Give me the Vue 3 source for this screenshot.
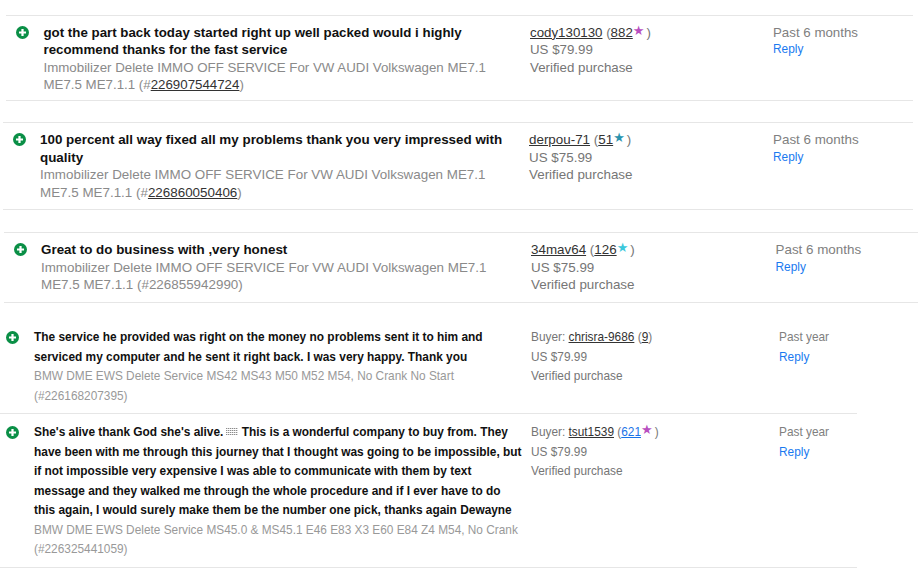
<template>
  <main class="page">
    <section v-for="r in reviews" :key="r.id" :class="['review', r.id]">
      <svg class="plus" viewBox="0 0 14 14" aria-hidden="true">
        <circle cx="7" cy="7" r="7" fill="#0a8f46" />
        <path d="M7 3.2v7.6M3.2 7h7.6" stroke="#fff" stroke-width="2.4" />
      </svg>
      <div class="body">
        <p class="comment">
          <template v-if="r.before">{{ r.before }} <span class="emoji" aria-hidden="true"></span> </template>{{ r.comment }}
        </p>
        <p class="item">
          {{ r.item }}
          (#<a v-if="r.itemLink" class="dark" href="#">{{ r.number }}</a><template v-else>{{ r.number }}</template>)
        </p>
      </div>
      <div class="buyer">
        <p>
          <template v-if="r.prefix">Buyer: </template><a class="dark" href="#">{{ r.name }}</a>
          (<a :class="r.blueScore ? 'blue' : 'dark'" href="#">{{ r.score }}</a><span v-if="r.star" :class="['star', r.star]">★</span>)
        </p>
        <p>{{ r.price }}</p>
        <p>Verified purchase</p>
      </div>
      <div class="when">
        <p>{{ r.when }}</p>
        <a class="reply" href="#">Reply</a>
      </div>
    </section>
  </main>
</template>

<script setup>
const immo = 'Immobilizer Delete IMMO OFF SERVICE For VW AUDI Volkswagen ME7.1 ME7.5 ME7.1.1'

const reviews = [
  {
    id: 'r1',
    comment: 'got the part back today started right up well packed would i highly recommend thanks for the fast service',
    item: immo,
    number: '226907544724',
    itemLink: true,
    name: 'cody130130',
    score: '882',
    star: 'purple',
    price: 'US $79.99',
    when: 'Past 6 months'
  },
  {
    id: 'r2',
    comment: '100 percent all way fixed all my problems thank you very impressed with quality',
    item: immo,
    number: '226860050406',
    itemLink: true,
    name: 'derpou-71',
    score: '51',
    star: 'teal',
    price: 'US $75.99',
    when: 'Past 6 months'
  },
  {
    id: 'r3',
    comment: 'Great to do business with ,very honest',
    item: immo,
    number: '226855942990',
    name: '34mav64',
    score: '126',
    star: 'cyan',
    price: 'US $75.99',
    when: 'Past 6 months'
  },
  {
    id: 'r4',
    comment: 'The service he provided was right on the money no problems sent it to him and serviced my computer and he sent it right back. I was very happy. Thank you',
    item: 'BMW DME EWS Delete Service MS42 MS43 M50 M52 M54, No Crank No Start',
    number: '226168207395',
    prefix: true,
    name: 'chrisra-9686',
    score: '9',
    price: 'US $79.99',
    when: 'Past year'
  },
  {
    id: 'r5',
    before: 'She\'s alive thank God she\'s alive.',
    comment: 'This is a wonderful company to buy from. They have been with me through this journey that I thought was going to be impossible, but if not impossible very expensive I was able to communicate with them by text message and they walked me through the whole procedure and if I ever have to do this again, I would surely make them be the number one pick, thanks again Dewayne',
    item: 'BMW DME EWS Delete Service MS45.0 & MS45.1 E46 E83 X3 E60 E84 Z4 M54, No Crank',
    number: '226325441059',
    prefix: true,
    name: 'tsut1539',
    score: '621',
    blueScore: true,
    star: 'purple',
    price: 'US $79.99',
    when: 'Past year'
  }
]
</script>

<style scoped>
.page {
  width: 918px;
  height: 579px;
  overflow: hidden;
  padding-top: 15px;
  box-sizing: border-box;
  font-family: "Liberation Sans", Arial, sans-serif;
  color: #767676;
}
p { margin: 0; }

.review {
  display: grid;
  align-items: start;
  box-sizing: border-box;
  border-bottom: 1px solid #e6e6e6;
  font-size: 13.3px;
  line-height: 17.6px;
}
.r1, .r2, .r3 { border-top: 1px solid #e6e6e6; }

.r1 { margin: 0 5px 0 6px; height: 86px; padding-top: 7.5px; grid-template-columns: 37.5px 486.5px 243px 1fr; }
.r2 { margin: 21px 5px 0 3px; height: 88px; padding-top: 8px; font-size: 13.4px; grid-template-columns: 37px 489px 244px 1fr; }
.r3 { margin: 22px 0 0 4px; height: 71px; padding-top: 8px; font-size: 13.4px; grid-template-columns: 37px 490px 244.5px 1fr; }
.r4, .r5 {
  width: 857px;
  font-size: 11.85px;
  line-height: 19.55px;
  grid-template-columns: 34px 497px 248px 1fr;
}
.r4 { height: 111px; padding-top: 25px; }
.r5 { height: 154px; padding-top: 9px; }

.plus {
  width: 13px;
  height: 13px;
  margin: 2px 0 0 10px;
}
.r4 .plus, .r5 .plus { margin: 3px 0 0 6px; }

.body { min-width: 0; padding-right: 20px; }
.r4 .body, .r5 .body { padding-right: 7px; }
.comment { color: #111; font-weight: 700; }
.r4 .comment, .r5 .comment { font-size: 11.9px; }
.item { color: #8a8a8a; }
.r4 .item, .r5 .item { color: #999; }

.dark { color: #333; text-decoration: underline; }
.blue { color: #1a73e8; text-decoration: underline; }

.star {
  display: inline-block;
  font-size: 13px;
  line-height: 1;
  margin-right: 2px;
  vertical-align: 2px;
  font-family: "DejaVu Sans", sans-serif;
}
.purple { color: #b84fc0; }
.teal { color: #2a93ad; }
.cyan { color: #3cc8dc; }

.when { color: #808080; }
.reply { display: block; color: #1a7af0; text-decoration: none; font-size: 11.9px; }

/* unrendered emoji in the original comment, shows as a speckled box */
.emoji {
  display: inline-block;
  width: 12px;
  height: 8px;
  margin: 0 4px 0 -1px;
  vertical-align: 0;
  background:
    repeating-linear-gradient(0deg, #fff 0 1px, transparent 1px 2px),
    repeating-linear-gradient(90deg, #8c8c8c 0 1px, #d8d8d8 1px 2px);
}
</style>
